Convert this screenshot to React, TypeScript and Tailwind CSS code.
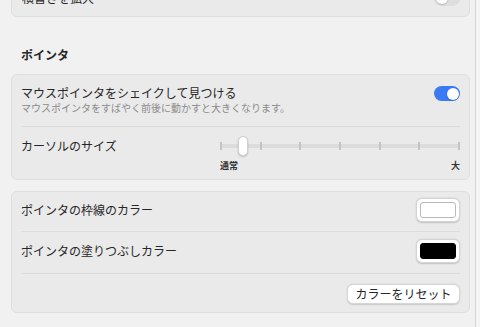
import React from 'react';

const font = { fontFamily: '"Noto Sans CJK JP", "Noto Sans", sans-serif' };

const Toggle: React.FC<{ on?: boolean }> = ({ on }) => (
    <div
        className={`w-[26px] h-[15px] rounded-full p-[1.5px] flex ${on ? 'bg-[#3a7bf4] justify-end' : 'bg-[#dedede] justify-start'}`}
    >
        <div className="w-[12px] h-[12px] rounded-full bg-white shadow-[0_0.5px_1.5px_rgba(0,0,0,0.3)]" />
    </div>
);

const Swatch: React.FC<{ color: string }> = ({ color }) => (
    <div className="w-[44px] h-[24px] rounded-[6px] bg-white border border-[#d4d4d4] shadow-[0_0.5px_1.5px_rgba(0,0,0,0.18)] p-[3px]">
        <div className={`w-full h-full rounded-[3px] border ${color === 'black' ? 'bg-black border-black' : 'bg-white border-[#b9b9b9]'}`} />
    </div>
);

const Divider = () => <div className="mx-[9px] border-t border-[#dcdcdc]" />;

const ticks = [0, 1, 2, 3, 4, 5, 6];

export default function App() {
    return (
        <div className="w-[480px] h-[327px] overflow-hidden flex bg-[#f5f5f5]" style={font}>
            <div className="w-[476px] h-full bg-[#f1f1f1] border-r border-[#d6d6d6] pl-[11px] pr-[5px] text-[#262626]">
                {/* cut-off card above */}
                <div className="mt-[-21px] h-[38px] rounded-[6px] bg-[#eaeaea] border border-[#dedede] flex items-center justify-between px-[10px]">
                    <span className="text-[12px]">横書きを拡大</span>
                    <div className="mr-[-1px]">
                        <Toggle />
                    </div>
                </div>

                <div className="pt-[29px] pb-[10px] pl-[10px] text-[12px] leading-[18px] font-bold">ポインタ</div>

                <div className="rounded-[6px] bg-[#eaeaea] border border-[#dedede]">
                    <div className="flex justify-between items-start pl-[9px] pr-[9px] pt-[10px] pb-[12px]">
                        <div>
                            <div className="text-[12px] leading-[16px]">マウスポインタをシェイクして見つける</div>
                            <div className="text-[10px] leading-[13px] text-[#8a8a8a]">マウスポインタをすばやく前後に動かすと大きくなります。</div>
                        </div>
                        <div className="mt-[1px]">
                            <Toggle on />
                        </div>
                    </div>
                    <Divider />
                    <div className="flex pl-[9px] pr-[9px] pt-[9px] pb-[6px]">
                        <div className="w-[199px] text-[12px] leading-[20px]">カーソルのサイズ</div>
                        <div className="w-[240px]">
                            <div className="relative h-[20px] flex items-center">
                                <div className="w-full h-[4px] rounded-full bg-[#dcdcdc]" />
                                <div className="absolute inset-0 flex justify-between items-center">
                                    {ticks.map((t) => (
                                        <div key={t} className="w-[2px] h-[8px] bg-[#c4c4c4]" />
                                    ))}
                                </div>
                                <div className="absolute left-[18px] top-0 w-[10px] h-[20px] rounded-full bg-white border border-[#cfcfcf] shadow-[0_1px_2px_rgba(0,0,0,0.2)]" />
                            </div>
                            <div className="flex justify-between text-[9px] leading-[14px] font-semibold mt-[3px] text-[#333]">
                                <span>通常</span>
                                <span>大</span>
                            </div>
                        </div>
                    </div>
                </div>

                <div className="mt-[11px] rounded-[6px] bg-[#eaeaea] border border-[#dedede]">
                    <div className="flex justify-between items-center px-[9px] pt-[6px] pb-[9px]">
                        <span className="text-[12px]">ポインタの枠線のカラー</span>
                        <Swatch color="white" />
                    </div>
                    <Divider />
                    <div className="flex justify-between items-center px-[9px] pt-[7px] pb-[10px]">
                        <span className="text-[12px]">ポインタの塗りつぶしカラー</span>
                        <Swatch color="black" />
                    </div>
                    <Divider />
                    <div className="flex justify-end px-[9px] pt-[10px] pb-[8px]">
                        <button className="w-[113px] h-[20px] rounded-[6px] bg-white border border-[#d6d6d6] shadow-[0_0.5px_1.5px_rgba(0,0,0,0.15)] text-[12px] leading-[18px] text-[#262626]">
                            カラーをリセット
                        </button>
                    </div>
                </div>
            </div>
        </div>
    );
}
